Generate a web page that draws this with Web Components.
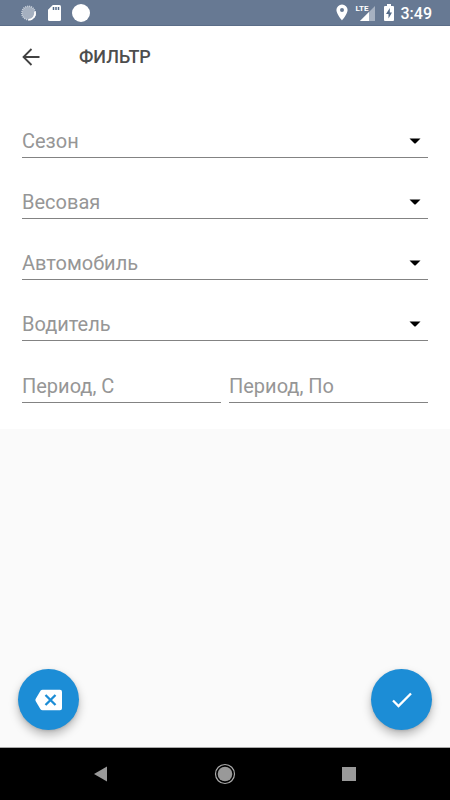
<!DOCTYPE html>
<html lang="ru">
<head>
<meta charset="utf-8">
<meta name="viewport" content="width=device-width, initial-scale=1">
<title>Фильтр</title>
<style>
  body { margin: 0; font-family: Roboto, "Noto Sans", sans-serif; background: #fafafa; }
</style>
</head>
<body>
<filter-screen></filter-screen>
<script>
function define(name, html, setup) {
  const template = document.createElement('template');
  template.innerHTML = html;
  customElements.define(name, class extends HTMLElement {
    constructor() {
      super();
      this.attachShadow({ mode: 'open' }).append(template.content.cloneNode(true));
    }
    connectedCallback() { if (setup) setup(this, this.shadowRoot); }
  });
}

define('status-bar', `
  <style>
    :host { display: flex; justify-content: space-between; align-items: center; box-sizing: border-box;
      height: 26px; padding: 0 18px 0 20px; background: #677993; color: #fff; border-bottom: 1px solid #5b6d88; }
    div { display: flex; align-items: center; }
    .left { gap: 11px; }
    svg { display: block; }
    .signal { display: grid; align-items: start; width: 20px; height: 18px; margin: 0 8px; }
    .signal > * { grid-area: 1 / 1; }
    .lte { font: bold 8px/9px "Liberation Sans Narrow", Roboto, sans-serif; }
    time { font-size: 16px; line-height: 20px; font-weight: 500; margin-left: 7px; padding-top: 2px; }
  </style>
  <div class="left">
    <svg width="17" height="18" viewBox="0 0 17 18"><circle cx="8.5" cy="9" r="6.7" fill="#a5b0c0"/><circle cx="8.5" cy="9" r="6.7" fill="none" stroke="#cbd2dc" stroke-width="1.5" stroke-dasharray="1 1"/><path d="M15 7.5A6.8 6.8 0 0 1 8.5 15.8" fill="none" stroke="#fff" stroke-width="1.8"/></svg>
    <svg width="13" height="18" viewBox="0 0 13 18"><path d="M4.8 1H11.5Q13 1 13 2.5V15.5Q13 17 11.5 17H1.5Q0 17 0 15.5V5.8Z" fill="#fff"/><path d="M5.5 3v3M8 3v3M10.5 3v3" stroke="#526987" stroke-width="1.5"/></svg>
    <svg width="18" height="18" viewBox="0 0 18 18"><circle cx="9" cy="9" r="9" fill="#fff"/></svg>
  </div>
  <div>
    <svg width="12" height="17" viewBox="0 0 12 17"><path fill="#fff" fill-rule="evenodd" d="M6 .5A5.6 5.6 0 0 0 .4 6.1C.4 10.2 6 16.5 6 16.5S11.6 10.2 11.6 6.1A5.6 5.6 0 0 0 6 .5ZM6 4.1a2 2 0 1 1 0 4a2 2 0 0 1 0-4Z"/></svg>
    <div class="signal">
      <svg width="20" height="18" viewBox="0 0 20 18"><path d="M4 17 19 2V17Z" fill="#a6b1c1"/><path d="M4 17 13 8V17Z" fill="#fff"/><path d="M0 0H12V9H0Z" fill="#677993"/></svg>
      <span class="lte">LTE</span>
    </div>
    <svg width="10" height="17" viewBox="0 0 10 17"><path d="M3 0H7V2H9Q10 2 10 3V16Q10 17 9 17H1Q0 17 0 16V3Q0 2 1 2H3Z" fill="#fff"/><path d="M5.8 4 2 10H4.5V14.5L8 8.5H5.8Z" fill="#526987"/></svg>
    <time>3:49</time>
  </div>`);

define('app-bar', `
  <style>
    :host { display: flex; align-items: center; height: 62px; padding: 0 19px; gap: 36px; background: #fff; color: #4d4d4d; }
    button { display: block; border: 0; padding: 0; background: none; color: inherit; }
    svg { display: block; }
    h1 { margin: 0; font-size: 18px; line-height: 24px; font-weight: 500; }
  </style>
  <button type="button" aria-label="Назад"><svg width="24" height="24" viewBox="0 0 24 24" fill="none" stroke="#424242" stroke-width="1.8"><path d="M20.5 12H4.5M12.5 4 4.5 12 12.5 20"/></svg></button>
  <h1><slot></slot></h1>`);

define('filter-select', `
  <style>
    :host { display: grid; align-items: center; height: 31px; border-bottom: 1px solid #838383; }
    select, svg { grid-area: 1 / 1; }
    select { appearance: none; box-sizing: border-box; width: 100%; height: 31px; margin: 0; padding: 0 0 2px; border: 0; border-radius: 0; outline: 0;
      background: none; color: #969696; font: 20px/24px Roboto, "Noto Sans", sans-serif; }
    svg { justify-self: end; margin: 0 7px 1px 0; pointer-events: none; }
  </style>
  <select><option value=""></option></select>
  <svg width="12" height="6" viewBox="0 0 12 6"><path d="M.5 .5H11.5L6.5 5.5H5.5Z"/></svg>`,
  (host, root) => {
    const label = host.getAttribute('label');
    root.querySelector('select').setAttribute('aria-label', label);
    root.querySelector('option').textContent = label;
  });

define('filter-input', `
  <style>
    :host { display: block; flex: 1; min-width: 0; border-bottom: 1px solid #838383; }
    input { display: block; box-sizing: border-box; width: 100%; height: 31px; margin: 0; padding: 0 0 2px; border: 0; outline: 0;
      background: none; color: #333; font: 20px/24px Roboto, "Noto Sans", sans-serif; }
    input::placeholder { color: #969696; opacity: 1; }
  </style>
  <input type="text">`,
  (host, root) => {
    const input = root.querySelector('input');
    input.placeholder = host.getAttribute('label');
    input.setAttribute('aria-label', input.placeholder);
  });

define('round-button', `
  <style>
    :host { display: block; }
    button { display: grid; place-items: center; width: 61px; height: 61px; padding: 0; border: 0; border-radius: 50%;
      background: #1c8dd6; box-shadow: 0 5px 10px rgba(0,0,0,.26), 0 1px 3px rgba(0,0,0,.12); }
  </style>
  <button type="button"><slot></slot></button>`,
  (host, root) => root.querySelector('button').setAttribute('aria-label', host.getAttribute('label')));

define('nav-bar', `
  <style>
    :host { display: flex; justify-content: space-between; align-items: center; box-sizing: border-box; height: 53px; padding: 0 20%;
      background: #000; border-top: 1px solid #a8a8a8; }
    button { display: grid; place-items: center; width: 22px; height: 22px; padding: 0; border: 0; background: none; }
    svg { display: block; }
  </style>
  <button type="button" aria-label="Назад"><svg width="22" height="22" viewBox="0 0 22 22"><path d="M4 11 17 3.5V18.5Z" fill="#999"/></svg></button>
  <button type="button" aria-label="Домой"><svg width="22" height="22" viewBox="0 0 22 22"><circle cx="11" cy="11" r="7.3" fill="#999"/><circle cx="11" cy="11" r="9.5" fill="none" stroke="#aaa" stroke-width="1.2"/></svg></button>
  <button type="button" aria-label="Недавние"><svg width="22" height="22" viewBox="0 0 22 22"><path d="M4 4H18V18H4Z" fill="#999"/></svg></button>`);

define('filter-screen', `
  <style>
    :host { display: flex; flex-direction: column; min-height: 100vh; }
    form { display: flex; flex-direction: column; gap: 29px; padding: 38px 22px 26px; background: #fff; }
    .period { display: flex; gap: 8px; padding-top: 1px; }
    .actions { display: flex; justify-content: space-between; margin-top: auto; padding: 17px 18px; }
  </style>
  <status-bar></status-bar>
  <app-bar>ФИЛЬТР</app-bar>
  <form>
    <filter-select label="Сезон"></filter-select>
    <filter-select label="Весовая"></filter-select>
    <filter-select label="Автомобиль"></filter-select>
    <filter-select label="Водитель"></filter-select>
    <div class="period">
      <filter-input label="Период, С"></filter-input>
      <filter-input label="Период, По"></filter-input>
    </div>
  </form>
  <div class="actions">
    <round-button label="Очистить"><svg width="28" height="22" viewBox="0 0 28 22"><path d="M7.5 .8H25Q27 .8 27 2.8V19.2Q27 21.2 25 21.2H7.5Q6.3 21.2 5.5 20.2L.6 12Q.1 11 .6 10L5.5 1.8Q6.3 .8 7.5 .8Z" fill="#fff"/><path d="M10.500 6 20.500 16M20.500 6 10.500 16" stroke="#1c8dd6" stroke-width="2.3"/></svg></round-button>
    <round-button label="Применить"><svg width="22" height="18" viewBox="0 0 22 18"><path d="M2 9.5 7.5 15 20 2.5" fill="none" stroke="#fff" stroke-width="2.3"/></svg></round-button>
  </div>
  <nav-bar></nav-bar>`);
</script>
</body>
</html>
